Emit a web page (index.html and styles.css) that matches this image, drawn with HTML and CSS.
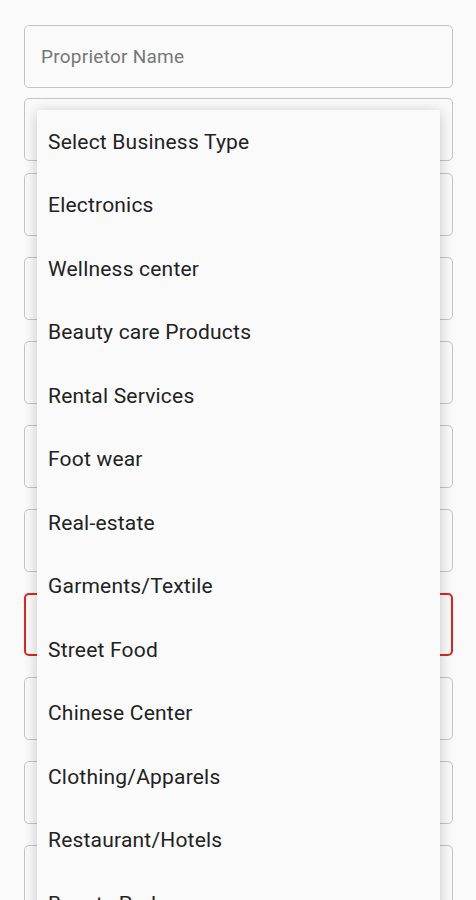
FILE: index.html
```html
<!DOCTYPE html>
<html lang="en">
<head>
  <meta charset="UTF-8" />
  <meta name="viewport" content="width=device-width, initial-scale=1.0" />
  <title>Business Registration</title>
  <link rel="stylesheet" href="styles.css">
</head>
<body>
  <form class="reg-form">
    <div class="field">
      <span class="placeholder">Proprietor Name</span>
    </div>
    <div class="field field-spinner"></div>
    <div class="field field-after-spinner"></div>
    <div class="field"></div>
    <div class="field"></div>
    <div class="field"></div>
    <div class="field"></div>
    <div class="field field-error"></div>
    <div class="field"></div>
    <div class="field"></div>
    <div class="field"></div>
  </form>

  <!-- business type dropdown (open) -->
  <ul class="dropdown">
    <li>Select Business Type</li>
    <li>Electronics</li>
    <li>Wellness center</li>
    <li>Beauty care Products</li>
    <li>Rental Services</li>
    <li>Foot wear</li>
    <li>Real-estate</li>
    <li>Garments/Textile</li>
    <li>Street Food</li>
    <li>Chinese Center</li>
    <li>Clothing/Apparels</li>
    <li>Restaurant/Hotels</li>
    <li>Beauty Parlor</li>
  </ul>
</body>
</html>
```

FILE: styles.css
```css
html, body {
  height: 100%;
}
body {
  margin: 0;
  padding: 25px 23px 0 24px;
  background-color: #fafafa;
  font-family: Roboto, "Noto Sans", Arial, sans-serif;
  overflow: hidden;
  position: relative;
}
.reg-form {
  display: flex;
  flex-direction: column;
}
.field {
  box-sizing: border-box;
  height: 63px;
  border: 1px solid #c4c4c4;
  border-radius: 5px;
  background-color: #fafafa;
  margin-top: 21px;
  display: flex;
  align-items: center;
  padding-left: 16px;
}
.field:first-child {
  margin-top: 0;
}
.field-spinner {
  margin-top: 10px;
}
.field-after-spinner {
  margin-top: 12px;
}
.field-error {
  border: 2px solid #e0241f;
}
.placeholder {
  color: #777777;
  font-size: 19px;
  letter-spacing: 0.25px;
  padding-bottom: 1px;
}
/* open spinner menu */
.dropdown {
  position: absolute;
  top: 110px;
  left: 37px;
  width: 403px;
  margin: 0;
  padding: 0;
  list-style: none;
  background-color: #fafafa;
  box-shadow: 0 2px 14px rgba(0, 0, 0, 0.22);
  border-radius: 2px;
}
.dropdown li {
  height: 63.5px;
  display: flex;
  align-items: center;
  padding-left: 11px;
  font-size: 21px;
  letter-spacing: 0.2px;
  color: #222222;
}
```
